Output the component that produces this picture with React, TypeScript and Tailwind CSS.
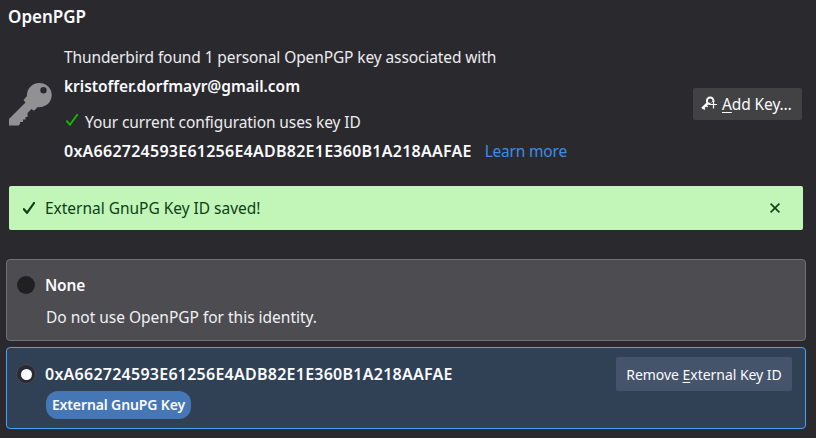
import React from "react";

function KeyIcon() {
  return (
    <svg className="h-11 w-11 shrink-0" viewBox="0 0 44 44" fill="#919194">
      <path
        fillRule="evenodd"
        d="M31 1a12.100 12.100 0 1 1-1.500 24l-2.500 3-1.500.500-2-1.500-4 4v4h-2v2.500h-2.500v2.500h-3v2l-1.500 1.500H1v-6.500L17.500 20.500l-2-2.500 3.500-4A12.100 12.100 0 0 1 31 1zM35.500 5a3.200 3.200 0 1 0 0 6.400a3.200 3.200 0 0 0 0-6.400z"
      />
    </svg>
  );
}

function CheckIcon({ className }: { className: string }) {
  return (
    <svg className={className} viewBox="0 0 12 12" fill="none" stroke="currentColor">
      <path d="M0.900 7.200L4 10.800L11.200 0.800" strokeLinecap="round" strokeLinejoin="round" />
    </svg>
  );
}

function AddKeyIcon() {
  return (
    <svg className="h-4 w-4 shrink-0" viewBox="0 0 16 16" fill="none" stroke="#fbfbfe">
      <circle cx="9.200" cy="4.700" r="3.300" strokeWidth="2" />
      <path d="M6.500 7.300L1.200 12.600" strokeWidth="2.600" />
      <path d="M2 11.500l1.900 1.900M4.700 9l1.900 1.900" strokeWidth="1.400" />
      <path d="M12.500 6v7M9.500 8.500h6.500" stroke="#424245" strokeWidth="3" />
      <path d="M12.500 5v7.500M9 8.500h7" strokeWidth="1.200" />
    </svg>
  );
}

export default function App() {
  return (
    <main className="flex h-[438px] w-[816px] flex-col overflow-hidden bg-[#2a2a2e] font-['Noto_Sans',sans-serif] text-[15.5px] leading-6 whitespace-nowrap text-[#fbfbfe]">
      <h1 className="mt-[5px] ml-2 h-6 text-[17px] font-semibold">
        <span>OpenPGP</span>
      </h1>

      <section className="flex h-[149px] items-center pl-2">
        <KeyIcon />
        <div className="ml-3 h-[122px] flex-1 pt-[2px]">
          <p className="h-[29px] text-[#ececf0]">
            <span className="tracking-[-0.110px]">Thunderbird found 1 personal OpenPGP key associated with</span>
          </p>
          <p className="h-9 font-semibold">
            <span className="tracking-[-0.020px]">kristoffer.dorfmayr@gmail.com</span>
          </p>
          <p className="flex h-[29px] text-[#ececf0]">
            <CheckIcon className="mt-1 mr-[7px] ml-0.5 h-3 w-3 stroke-[1.900] text-[#12bc00]" />
            <span className="tracking-[-0.1px]">Your current configuration uses key ID</span>
          </p>
          <p className="flex gap-[13px]">
            <strong className="text-[16px] font-semibold tracking-[0.250px]">0xA662724593E61256E4ADB82E1E360B1A218AAFAE</strong>
            <a className="tracking-[-0.200px] text-[#3a8ee6]">Learn more</a>
          </p>
        </div>
        <button className="mr-[14px] flex h-8 w-[109px] items-center rounded-xs bg-[#424245] pl-2">
          <AddKeyIcon />
          <span className="ml-[5px] tracking-[-0.1px]">
            <u className="underline-offset-2">A</u>dd Key…
          </span>
        </button>
      </section>

      <div className="mt-2 mr-[13px] ml-[9px] flex h-11 shrink-0 items-center rounded-xs bg-[#c1f6b8] pr-[23px] pl-[14px] text-[#0e3f16]">
        <CheckIcon className="h-3 w-3 stroke-[2.200]" />
        <span className="ml-[10px] flex-1 tracking-[-0.020px]">External GnuPG Key ID saved!</span>
        <svg className="h-[10px] w-[10px]" viewBox="0 0 10 10" stroke="currentColor" strokeWidth="1.600">
          <path d="M.6.600l8.800 8.800M9.400.600L.600 9.400" />
        </svg>
      </div>

      <div className="mt-[29px] mr-[10px] ml-[6px] flex h-[82px] shrink-0 rounded-sm border border-[#717175] bg-[#4d4c50] pt-[13px] pl-[10px]">
        <span className="mt-[3px] h-[18px] w-[18px] rounded-full bg-[#202022]" />
        <div className="ml-[10px]">
          <p className="h-8 font-semibold tracking-[-0.200px]">None</p>
          <p className="pl-px text-[#f0f0f4]">
            <span className="tracking-[-0.010px]">Do not use OpenPGP for this identity.</span>
          </p>
        </div>
      </div>

      <div className="mt-[6px] mr-[10px] ml-[6px] flex h-[82px] shrink-0 rounded-sm border border-[#45a1ff] bg-[#304156] pl-[9px]">
        <span className="mt-4 flex h-5 w-5 items-center justify-center rounded-full border border-[#48484f] bg-[#2a2a35]">
          <span className="h-[11px] w-[11px] rounded-full bg-white" />
        </span>
        <div className="mt-[14px] ml-[9px] flex-1">
          <p className="h-[29px] text-[16px] font-semibold">
            <span className="tracking-[0.250px]">0xA662724593E61256E4ADB82E1E360B1A218AAFAE</span>
          </p>
          <span className="ml-px flex h-7 w-[145px] items-center justify-center rounded-[12px] bg-[#4577b7] text-[14px] font-semibold">
            <span className="tracking-[-0.120px]">External GnuPG Key</span>
          </span>
        </div>
        <button className="mt-[9px] mr-[13px] flex h-[34px] w-[176px] items-center justify-center rounded-xs bg-[#45546a] pt-px text-[14px]">
          <span className="tracking-[-0.040px]">
            Remove <u className="underline-offset-2">E</u>xternal Key ID
          </span>
        </button>
      </div>
    </main>
  );
}
